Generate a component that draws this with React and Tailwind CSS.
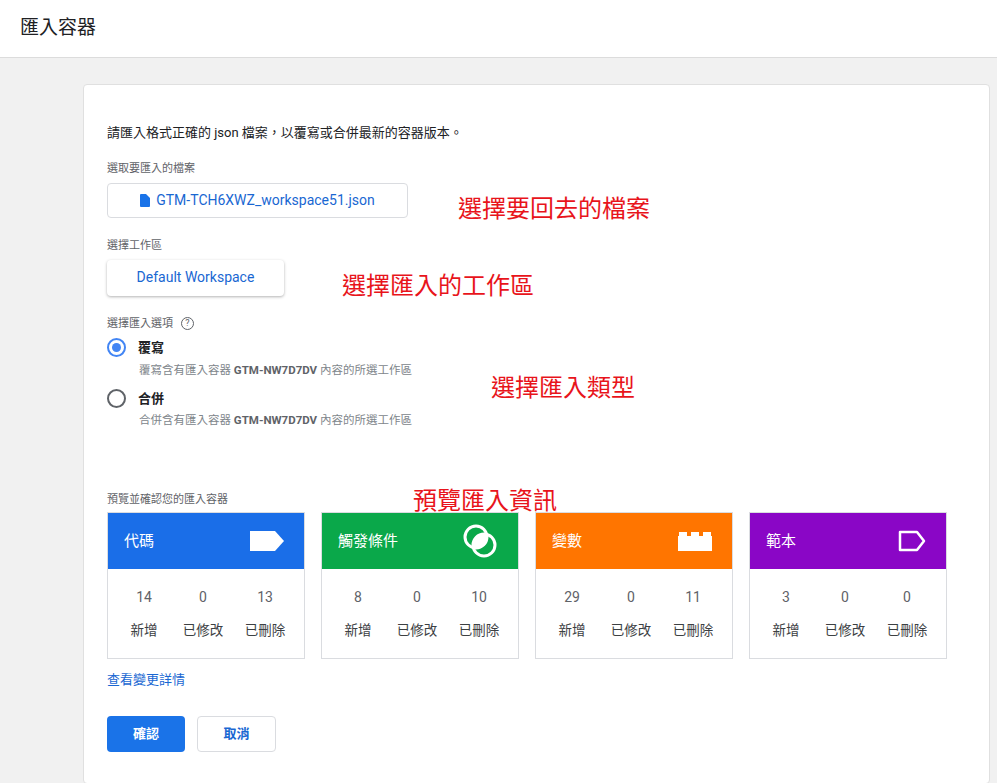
import React from 'react'

const font = { fontFamily: 'Roboto, "Noto Sans CJK TC", sans-serif' }

const TagIcon = () => (
  <svg width="34" height="20" viewBox="0 0 34 20"><path d="M0 0h25l9 10-9 10H0z" fill="#fff" /></svg>
)
const TriggerIcon = () => (
  <svg width="36" height="36" viewBox="0 0 36 36" fill="none" stroke="#fff" strokeWidth="3">
    <circle cx="14" cy="14" r="11" />
    <circle cx="22" cy="22" r="11" />
    <path d="M11 22a11 11 0 0 1 14-11a11 11 0 0 1-14 14z" fill="#fff" stroke="none" />
  </svg>
)
const BrickIcon = () => (
  <svg width="34" height="20" viewBox="0 0 34 20" fill="#fff">
    <rect x="0" y="5" width="34" height="15" />
    <rect x="1" y="1" width="8" height="5" /><rect x="13" y="1" width="8" height="5" /><rect x="25" y="1" width="8" height="5" />
  </svg>
)
const TemplateIcon = () => (
  <svg width="28" height="22" viewBox="0 0 28 22" fill="none" stroke="#fff" strokeWidth="2.5"><path d="M2 2h17l7 9-7 9H2z" strokeLinejoin="round" /></svg>
)

const cards = [
  { t: '代碼', bg: 'bg-[#1a6ee8]', icon: <TagIcon />, n: [14, 0, 13] },
  { t: '觸發條件', bg: 'bg-[#0aa84a]', icon: <TriggerIcon />, n: [8, 0, 10] },
  { t: '變數', bg: 'bg-[#ff7500]', icon: <BrickIcon />, n: [29, 0, 11] },
  { t: '範本', bg: 'bg-[#8a06c6]', icon: <TemplateIcon />, n: [3, 0, 0] },
]

export default function App() {
  return (
    <div className="w-[997px] h-[783px] bg-[#f1f1f1] overflow-hidden relative" style={font}>
      <div className="h-[58px] bg-white border-b border-[#dcdcdc] flex items-center px-5 text-[19px] text-[#202124]">匯入容器</div>
      <div className="ml-[83px] mt-[26px] w-[907px] h-[700px] bg-white border border-[#e0e0e0] rounded-sm pl-[23px] pt-[38px] text-[#202124]">
        <p className="text-[13px]">請匯入格式正確的 json 檔案，以覆寫或合併最新的容器版本。</p>
        <p className="mt-[18px] text-[11px] text-[#5f6368]">選取要匯入的檔案</p>
        <div className="mt-[6px] w-[301px] h-[35px] border border-[#dadce0] rounded flex items-center justify-center gap-1.5 text-[#1967d2] text-[14px]">
          <svg width="10" height="13" viewBox="0 0 10 13"><path d="M0 1a1 1 0 0 1 1-1h5l4 4v8a1 1 0 0 1-1 1H1a1 1 0 0 1-1-1z" fill="#1a73e8" /></svg>
          GTM-TCH6XWZ_workspace51.json
        </div>
        <p className="mt-[20px] text-[11px] text-[#5f6368]">選擇工作區</p>
        <div className="mt-[5px] w-[177px] h-[36px] rounded shadow-[0_1px_3px_rgba(0,0,0,0.3)] flex items-center justify-center text-[#1967d2] text-[14px]">Default Workspace</div>
        <div className="mt-[20px] flex items-center gap-2 text-[11px] text-[#5f6368]">選擇匯入選項
          <span className="w-[13px] h-[13px] rounded-full border border-[#5f6368] text-[9px] flex items-center justify-center">?</span>
        </div>
        <div className="mt-[6px] flex items-center gap-3">
          <span className="w-[19px] h-[19px] rounded-full border-2 border-[#4285f4] flex items-center justify-center"><span className="w-[9px] h-[9px] rounded-full bg-[#4285f4]" /></span>
          <span className="text-[13px] font-bold">覆寫</span>
        </div>
        <p className="ml-[32px] mt-[4px] text-[11.5px] text-[#80868b]">覆寫含有匯入容器 <b className="text-[#5f6368]">GTM-NW7D7DV</b> 內容的所選工作區</p>
        <div className="mt-[10px] flex items-center gap-3">
          <span className="w-[19px] h-[19px] rounded-full border-2 border-[#5f6368]" />
          <span className="text-[13px] font-bold">合併</span>
        </div>
        <p className="ml-[32px] mt-[4px] text-[11.5px] text-[#80868b]">合併含有匯入容器 <b className="text-[#5f6368]">GTM-NW7D7DV</b> 內容的所選工作區</p>
        <p className="mt-[62px] text-[11px] text-[#5f6368]">預覽並確認您的匯入容器</p>
        <div className="mt-[4px] flex gap-[16px]">
          {cards.map((c) => (
            <div key={c.t} className="w-[198px] border border-[#dadce0]">
              <div className={`${c.bg} h-[56px] flex items-center justify-between pl-4 pr-5 text-white text-[15px]`}>{c.t}{c.icon}</div>
              <div className="h-[89px] grid grid-cols-[56px_62px_62px] content-center text-center gap-y-[12px] px-[8px]">
                {c.n.map((v, i) => <span key={i} className="text-[14px] text-[#5f6368]">{v}</span>)}
                {['新增', '已修改', '已刪除'].map((l) => <span key={l} className="text-[13.5px] text-[#3c4043]">{l}</span>)}
              </div>
            </div>
          ))}
        </div>
        <p className="mt-[11px] text-[13px] text-[#1967d2]">查看變更詳情</p>
        <div className="mt-[26px] flex gap-[12px]">
          <button className="w-[78px] h-[36px] rounded bg-[#1a73e8] text-white text-[13px] font-bold">確認</button>
          <button className="w-[79px] h-[36px] rounded border border-[#dadce0] text-[#1967d2] text-[13px] font-bold">取消</button>
        </div>
      </div>
      <div className="absolute text-[#e8141b] text-[24px]" style={{ left: 458, top: 191 }}>選擇要回去的檔案</div>
      <div className="absolute text-[#e8141b] text-[24px]" style={{ left: 342, top: 268 }}>選擇匯入的工作區</div>
      <div className="absolute text-[#e8141b] text-[24px]" style={{ left: 491, top: 370 }}>選擇匯入類型</div>
      <div className="absolute text-[#e8141b] text-[24px]" style={{ left: 413, top: 483 }}>預覽匯入資訊</div>
    </div>
  )
}
